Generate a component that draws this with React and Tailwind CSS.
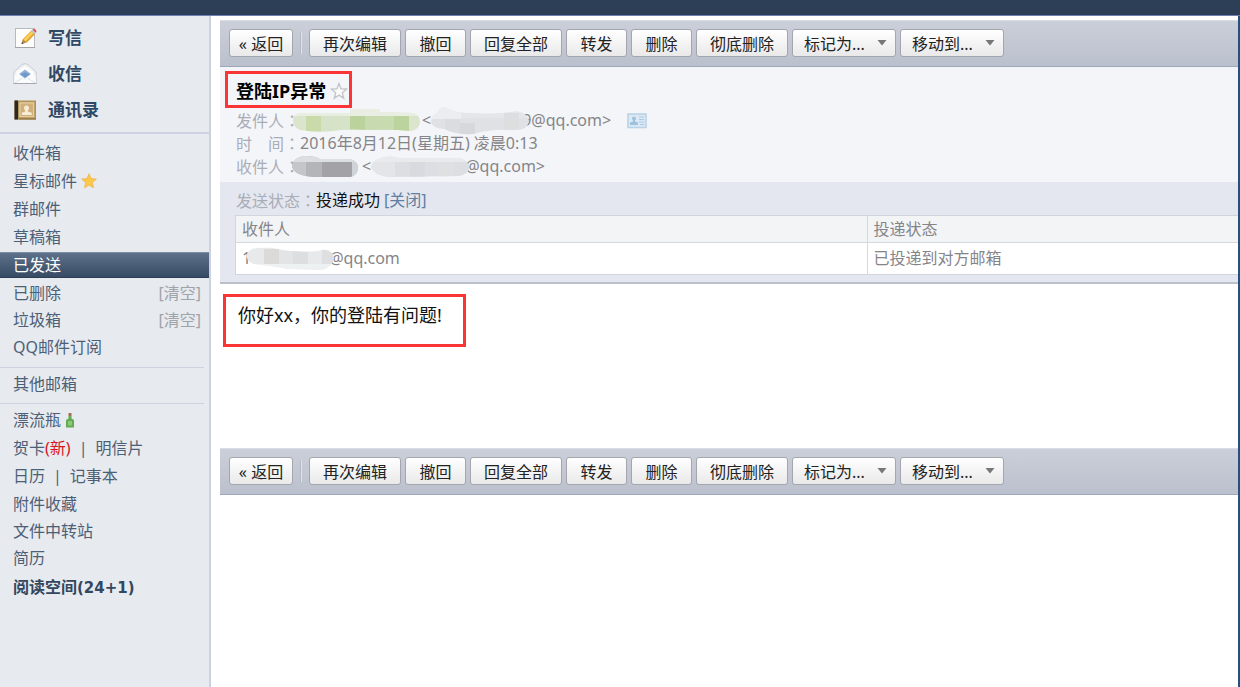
import { clsx } from 'clsx';

const MAIN_LINKS = [
  { id: 'compose', label: '写信', icon: ComposeIcon },
  { id: 'receive', label: '收信', icon: InboxIcon },
  { id: 'contacts', label: '通讯录', icon: ContactsIcon },
];

const FOLDERS = [
  { label: '收件箱' },
  { label: '星标邮件', icon: GoldStar },
  { label: '群邮件' },
  { label: '草稿箱' },
  { label: '已发送', active: true },
];

const CLEANABLE = [
  { label: '已删除', clear: true },
  { label: '垃圾箱', clear: true },
  { label: 'QQ邮件订阅' },
];

const EXTRAS = ['附件收藏', '文件中转站', '简历'];

const ACTIONS = [
  { label: '再次编辑', width: 'w-23' },
  { label: '撤回', width: 'w-[61px]' },
  { label: '回复全部', width: 'w-23' },
  { label: '转发', width: 'w-[61px]' },
  { label: '删除', width: 'w-[61px]' },
  { label: '彻底删除', width: 'w-23' },
];

const MENUS = ['标记为...', '移动到...'];

function ComposeIcon() {
  return (
    <svg width="24" height="24" viewBox="0 0 24 24" aria-hidden="true">
      <rect x="2.5" y="2.5" width="19" height="19" fill="#fdfdfd" stroke="#b9babd" />
      <path d="M2 21.5h20" stroke="#a2a4a8" />
      <path d="M8.5 18l1.5-5L18.6 4.3l3.4 3.3-8.6 8.9z" fill="#f2b22c" />
      <path d="M11.4 14.6l8.6-8.8" stroke="#fbd873" strokeWidth="1.6" />
      <path d="M13.4 16.3l8-8.2" stroke="#d18b1c" />
      <path d="M18 4.9l1.6-1.6 3.3 3.2-1.7 1.6z" fill="#bfc3ca" />
      <path d="M19.4 3.5c1.8-1.7 5.2.5 3.6 3.3z" fill="#df4b4b" />
      <path d="M8.5 18l1.5-5 3.3 3.4z" fill="#b08f58" />
      <path d="M8.5 18l.6-2 1.4 1.4z" fill="#4b4238" />
    </svg>
  );
}

function InboxIcon() {
  return (
    <svg width="24" height="24" viewBox="0 0 24 24" aria-hidden="true">
      <path d="M.8 10L9 2.5Q12 .8 15 2.5L23.2 10v11.5H.8z" fill="#eff0f2" stroke="#c9ccd1" />
      <path d="M3.5 10L12 4l8.5 6v7h-17z" fill="#fdfdfd" />
      <path d="M1.3 12.5L12 18l10.7-5.5V21H1.3z" fill="#fafbfb" />
      <path d="M6 12l6-4.5 6 4.5-6 4.5z" fill="#93b3d9" />
      <path d="M7.5 12.3l4.500-2 4.500 2-4.500 3.300z" fill="#6f97ca" />
      <path d="M1.5 21l8-5M22.5 21l-8-5" stroke="#dfe2e6" />
      <path d="M.5 21.5h23" stroke="#a5a9af" />
    </svg>
  );
}

function ContactsIcon() {
  return (
    <svg width="24" height="24" viewBox="0 0 24 24" aria-hidden="true">
      <rect x="1.5" y="2.5" width="21.5" height="19" fill="#b39258" />
      <rect x="1.5" y="2.5" width="3.5" height="19" fill="#2b2721" />
      <rect x="6" y="4" width="15.5" height="15.5" fill="#cfb07a" />
      <rect x="7" y="5" width="13.5" height="13.5" fill="none" stroke="#e3cfa3" />
      <circle cx="13.5" cy="10" r="2.5" fill="#f7ecd3" />
      <path d="M12.2 11h2.6v2.5l4 1.3V17h-10v-2.2l3.4-1.3z" fill="#f7ecd3" />
      <path d="M5.5 21H23" stroke="#8a6c3b" />
    </svg>
  );
}

function GoldStar() {
  return (
    <svg width="16" height="16" viewBox="0 0 16 16" aria-hidden="true">
      <path
        d="M8 .8l2.1 4.8 5.2.5-3.9 3.5 1.1 5.2L8 12.1l-4.5 2.7 1.1-5.2L.7 6.1l5.2-.5z"
        fill="#fbc84c"
        stroke="#f0b24e"
        strokeWidth=".8"
      />
    </svg>
  );
}

function EmptyStar() {
  return (
    <svg width="18" height="18" viewBox="0 0 18 18" aria-hidden="true">
      <path
        d="M9 1.5l2 5.3 5.6.3-4.3 3.6 1.4 5.5L9 13.1l-4.7 3.1 1.4-5.5L1.4 7.1 7 6.8z"
        fill="#fbfbfc"
        stroke="#c3c6cb"
        strokeWidth="1.4"
      />
    </svg>
  );
}

function BottleIcon() {
  return (
    <svg width="10" height="16" viewBox="0 0 10 16" aria-hidden="true">
      <path d="M3.5 4h3v2.5L9 8v7.5H1V8l2.5-1.5z" fill="#63ab52" />
      <path d="M3 9h4v4.5H3z" fill="#8cca78" />
      <path d="M3.5 1h3v3h-3z" fill="#9a7257" />
    </svg>
  );
}

function CardIcon() {
  return (
    <svg width="20" height="16" viewBox="0 0 20 16" aria-hidden="true">
      <rect x="1" y="1" width="18" height="13.5" fill="#dce9f4" stroke="#b9d3e7" strokeWidth="1.6" />
      <circle cx="7" cy="5.5" r="2" fill="#9cc2e0" />
      <path d="M6 7h2v1.5l3 1V12H3V9.5l3-1z" fill="#9cc2e0" />
      <path d="M12 4h5M12 6.5h5M12 9h5M13 11.5h4" stroke="#a9cae4" />
    </svg>
  );
}

// Pixelated strip laid over private text; cells are [x, y, w, h, fill].
function Mosaic({ id, width, outline, base, cells, className }) {
  return (
    <svg
      className={clsx('shrink-0', className)}
      width={width}
      height="28"
      viewBox={`0 0 ${width} 28`}
      aria-hidden="true"
    >
      <clipPath id={id}>
        <path d={outline} />
      </clipPath>
      <g clipPath={`url(#${id})`}>
        <rect width={width} height="28" fill={base} />
        {cells.map(([x, y, w, h, fill]) => (
          <rect key={`${x}-${y}`} x={x} y={y} width={w} height={h} fill={fill} />
        ))}
      </g>
    </svg>
  );
}

function SidebarRow({ label, icon: Icon, active, clear, className }) {
  return (
    <li className={clsx('flex items-center', className)}>
      <div
        className={clsx(
          'flex h-[26px] w-full items-center justify-between pr-2 pl-[13px]',
          active && 'border-y border-[#7d8ea3] border-b-[#2c3e55] bg-linear-to-b from-[#5d718a] to-[#384b64] text-white'
        )}
      >
        <a href="#" className="flex items-center gap-1">
          {label}
          {Icon && <Icon />}
        </a>
        {clear && (
          <a href="#" className="text-[#a0a3a8]">[清空]</a>
        )}
      </div>
    </li>
  );
}

function Sidebar() {
  return (
    <nav className="w-[211px] shrink-0 border-r-2 border-[#cbd2dd] bg-[#e7eaef] text-base leading-6 text-[#4d5f76]">
      <ul className="border-b-2 border-[#cdd3e0] pt-1 pb-1 text-[17px] font-bold text-[#2f4865]">
        {MAIN_LINKS.map(({ id, label, icon: Icon }) => (
          <li key={id} className="h-9">
            <a href="#" className="flex h-full items-center gap-[11px] pl-[13px]">
              <Icon />
              {label}
            </a>
          </li>
        ))}
      </ul>

      <ul className="mt-[5px]">
        {FOLDERS.map((item) => (
          <SidebarRow key={item.label} className="h-7" {...item} />
        ))}
        {CLEANABLE.map((item) => (
          <SidebarRow key={item.label} className="h-[27px]" {...item} />
        ))}
      </ul>

      <div className="mt-[7px] mr-[5px] border-y border-[#ccd2de] pt-1 pb-[7px]">
        <a href="#" className="block pl-[13px] leading-6">其他邮箱</a>
      </div>

      <ul className="mt-0.5">
        <SidebarRow className="h-7" label="漂流瓶" icon={BottleIcon} />
        <li className="flex h-7 items-center pl-[13px]">
          <a href="#">贺卡<span className="text-[#d9141e]">(新)</span></a>
          <span className="px-2">|</span>
          <a href="#">明信片</a>
        </li>
        <li className="flex h-7 items-center pl-[13px]">
          <a href="#">日历</a>
          <span className="px-2">|</span>
          <a href="#">记事本</a>
        </li>
        {EXTRAS.map((label) => (
          <SidebarRow key={label} className="h-[27px]" label={label} />
        ))}
        <li className="flex h-8 items-center pl-[13px] font-bold text-[#33475f]">
          <a href="#">
            阅读空间<span className="font-['DejaVu_Sans',sans-serif] text-[15px]">(24+1)</span>
          </a>
        </li>
      </ul>
    </nav>
  );
}

const buttonClass =
  'h-7 rounded-[3px] border border-[#a3a6ad] bg-linear-to-b from-white to-[#e9e9ea] pt-0.5 text-center text-base leading-6 whitespace-nowrap text-[#222]';

function Toolbar({ name }) {
  return (
    <div
      role="toolbar"
      aria-label={name}
      className="flex h-[47px] items-center gap-1 border-t border-b border-t-[#d9dce4] border-b-[#9fa8b8] bg-linear-to-b from-[#cacfd9] to-[#bbc0cd] pb-0.5 pl-[9px]"
    >
      <button type="button" className={clsx(buttonClass, 'w-16')}>« 返回</button>
      <span className="mx-[3px] h-[22px] w-0.5 border-l border-[#b4b9c4] bg-[#dfe2e8]" />
      {ACTIONS.map(({ label, width }) => (
        <button key={label} type="button" className={clsx(buttonClass, width)}>
          {label}
        </button>
      ))}
      {MENUS.map((label) => (
        <div key={label} className="grid w-[104px] items-center">
          <select
            aria-label={label}
            className={clsx(buttonClass, 'col-start-1 row-start-1 w-full appearance-none pl-[11px] text-left')}
          >
            <option>{label}</option>
          </select>
          <svg
            className="pointer-events-none col-start-1 row-start-1 mr-[9px] justify-self-end"
            width="10"
            height="6"
            viewBox="0 0 10 6"
            aria-hidden="true"
          >
            <path d="M.5 0h9L5 5.5z" fill="#777" />
          </svg>
        </div>
      ))}
    </div>
  );
}

function Label({ children }) {
  return (
    <span className="text-[#a9adb8]">
      {children}
      <span className="font-['Noto_Sans_CJK_TC',sans-serif]">：</span>
    </span>
  );
}

function MailHeader() {
  return (
    <section className="bg-[#f4f5f8] pt-1 pb-1 text-base leading-[23px] text-[#858589]">
      <div className="mb-px ml-[5px] flex h-[37px] w-[127px] items-center gap-1 border-3 border-[#fb3536] pt-0.5 pl-2">
        <h1 className="text-lg font-bold whitespace-nowrap text-black">登陆IP异常</h1>
        <button type="button" aria-label="星标" className="shrink-0">
          <EmptyStar />
        </button>
      </div>
      <div className="flex h-[23px] items-center pl-4">
        <Label>发件人</Label>
        <Mosaic
          id="sender-name"
          width={128}
          className="-ml-2"
          outline="M1 14Q1 7 8 6L58 6V2h30v3l32 1Q128 7 128 15Q127 23 119 24Q100 22 80 23Q60 22 48 23Q28 26 8 23Q1 20 1 14z"
          base="#dbe5cd"
          cells={[
            [0, 0, 128, 9, '#e9eee2'],
            [14, 9, 15, 19, '#c8dba9'],
            [29, 9, 29, 19, '#d7e3c8'],
            [58, 9, 15, 19, '#bcd29d'],
            [73, 9, 29, 19, '#c8dab0'],
            [102, 9, 15, 19, '#bbd39c'],
          ]}
        />
        <span className="ml-0.5">&lt;</span>
        <Mosaic
          id="sender-mail"
          width={98}
          className="z-1"
          outline="M0 14Q1 8 7 5Q10-2 17 2Q25 6 36 6Q60 8 80 5Q94 2 98 14Q96 24 84 23Q60 22 42 27Q24 28 14 22Q0 21 0 14z"
          base="#dfe1e4"
          cells={[
            [0, 0, 30, 12, '#ebedef'],
            [30, 0, 68, 11, '#e4e6e8'],
            [14, 12, 15, 16, '#dadde0'],
            [29, 16, 15, 12, '#d7d8db'],
            [73, 6, 15, 22, '#dcdee0'],
          ]}
        />
        <span className="-ml-[7px]">9@qq.com&gt;</span>
        <button type="button" aria-label="联系人资料" className="ml-4">
          <CardIcon />
        </button>
      </div>
      <div className="flex h-[23px] items-center pl-4">
        <Label>时　间</Label>
        <time dateTime="2016-08-12T00:13">2016年8月12日(星期五) 凌晨0:13</time>
      </div>
      <div className="flex h-[23px] items-center pl-4">
        <Label>收件人</Label>
        <Mosaic
          id="receiver-name"
          width={66}
          className="-ml-2"
          outline="M0 13Q1 4 13 3Q24 3 28 6L58 6Q66 8 66 15Q65 23 58 24L20 24Q1 22 0 13z"
          base="#b4b5b9"
          cells={[
            [0, 0, 66, 9, '#dcdfe2'],
            [0, 9, 14, 19, '#c5c6ca'],
            [30, 9, 30, 19, '#a3a3a7'],
            [60, 9, 6, 19, '#d0d4d8'],
          ]}
        />
        <span className="ml-1">&lt;</span>
        <Mosaic
          id="receiver-mail"
          width={98}
          className="z-1 -mr-1"
          outline="M0 14Q2 7 10 5Q18 2 28 5L88 5Q97 7 98 14Q97 22 88 23L18 24Q3 22 0 14z"
          base="#dcdee2"
          cells={[
            [0, 0, 98, 9, '#e8eaec'],
            [0, 9, 24, 19, '#e3e5e9'],
            [39, 9, 15, 19, '#d7dade'],
            [68, 9, 15, 19, '#dfe0e2'],
          ]}
        />
        <span>@qq.com&gt;</span>
      </div>
    </section>
  );
}

function DeliveryStatus() {
  return (
    <section className="border-b-2 border-[#bbc1ca] bg-[#e4e7ef] pt-[6px] pb-[7px] text-base leading-6 text-[#858589]">
      <p className="mb-[2px] flex pl-4">
        <Label>发送状态</Label>
        <span className="text-[#111]">投递成功</span>
        <a href="#" className="ml-1 text-[#5f7fa3]">[关闭]</a>
      </p>
      <div className="pl-[15px]">
        <table className="w-full border-collapse border-y border-l border-[#cfd6e1] bg-white text-left">
          <thead>
            <tr className="border-b border-[#d5d9de] bg-[#f2f4f6]">
              <th className="h-[27px] w-[63%] border-r border-[#d5d9de] px-[6px] font-normal">收件人</th>
              <th className="px-[6px] font-normal">投递状态</th>
            </tr>
          </thead>
          <tbody>
            <tr>
              <td className="h-8 border-r border-[#d5d9de] px-[6px] pb-0.5">
                <div className="flex h-6 items-center">
                  <span>1</span>
                  <Mosaic
                    id="delivery-mail"
                    width={88}
                    className="z-1 -mx-[5px]"
                    outline="M0 12Q3 4 12 4Q25 3 32 5Q50 9 72 7Q84 3 88 13Q87 23 76 26Q58 25 42 25Q22 21 8 20Q2 18 0 12z"
                    base="#e8e9ea"
                    cells={[
                      [18, 5, 15, 15, '#dbdad9'],
                      [33, 7, 14, 13, '#e3e4e5'],
                      [47, 7, 15, 13, '#dddedf'],
                      [76, 5, 12, 15, '#dddfe0'],
                      [0, 20, 88, 8, '#eef1f2'],
                    ]}
                  />
                  <span>@qq.com</span>
                </div>
              </td>
              <td className="px-[6px] pb-0.5">已投递到对方邮箱</td>
            </tr>
          </tbody>
        </table>
      </div>
    </section>
  );
}

export default function App() {
  return (
    <div className="flex min-h-screen flex-col bg-white font-['Noto_Sans','Noto_Sans_CJK_SC',sans-serif]">
      <header className="h-4 border-b border-[#6c7fb4] bg-[#2c3f57]" />
      <div className="flex flex-1 border-r-2 border-[#24507d]">
        <Sidebar />
        <main className="min-w-0 flex-1 pt-1 pl-[9px]">
          <Toolbar name="邮件操作" />
          <MailHeader />
          <DeliveryStatus />
          <article className="h-[164px] pt-[10px] pl-[3px]">
            <p className="h-[53px] w-[243px] border-3 border-[#fb3536] pt-[6px] pl-3 text-lg leading-6 whitespace-nowrap text-[#111]">
              你好xx，你的登陆有问题!
            </p>
          </article>
          <Toolbar name="底部邮件操作" />
        </main>
      </div>
    </div>
  );
}
